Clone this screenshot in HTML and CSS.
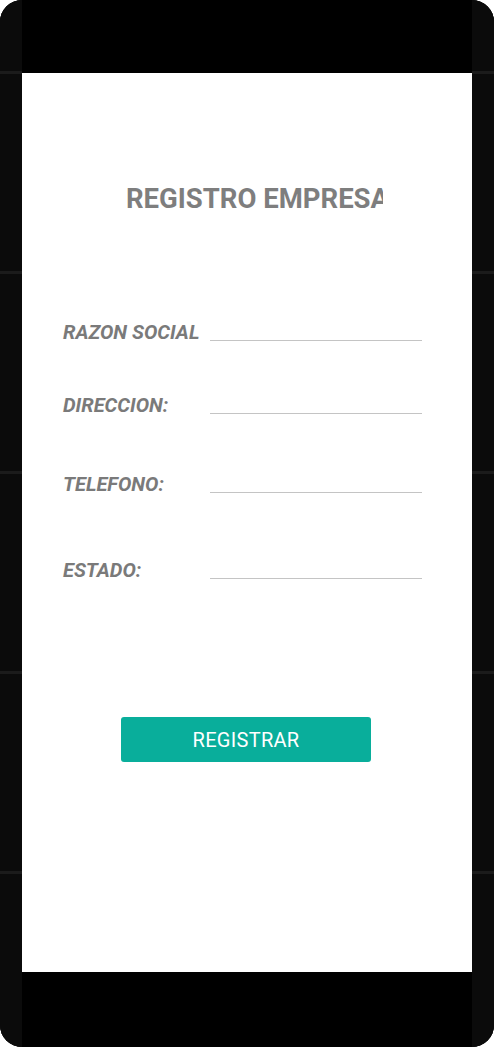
FILE: index.html
```html
<!DOCTYPE html>
<html lang="es">
<head>
<meta charset="utf-8">
<title>Registro Empresa</title>
<link rel="stylesheet" href="styles.css">
</head>
<body>
<div class="device">
  <div class="bezel"></div>
  <div class="center">
    <div class="bar bar--top"></div>
    <main class="screen">
      <h1 class="title">REGISTRO EMPRESA</h1>
      <div class="form">
        <div class="row row--1"><span class="label">RAZON SOCIAL</span><span class="field"></span></div>
        <div class="row row--2"><span class="label">DIRECCION:</span><span class="field"></span></div>
        <div class="row row--3"><span class="label">TELEFONO:</span><span class="field"></span></div>
        <div class="row row--4"><span class="label">ESTADO:</span><span class="field"></span></div>
      </div>
      <button class="btn" type="button">REGISTRAR</button>
    </main>
    <div class="bar bar--bottom"></div>
  </div>
  <div class="bezel"></div>
</div>
</body>
</html>
```

FILE: styles.css
```css
html, body {
  margin: 0;
  padding: 0;
  background: #ffffff;
}

.device {
  width: 494px;
  height: 1047px;
  display: grid;
  grid-template-columns: 22px 1fr 22px;
  border-radius: 22px;
  overflow: hidden;
  background: #000;
}

.bezel {
  background-color: #0b0b0b;
  background-image: linear-gradient(#1b1b1b 0 3px, #0b0b0b 3px 200px);
  background-size: 100% 200px;
  background-position: 0 71px;
  background-repeat: repeat-y;
}

.center {
  display: flex;
  flex-direction: column;
}

.bar {
  background: #000;
}

.bar--top { height: 73px; }
.bar--bottom { flex: 1; }

.screen {
  height: 899px;
  background: #fff;
  display: flex;
  flex-direction: column;
  font-family: Roboto, "Liberation Sans", sans-serif;
}

.title {
  margin: 111px 0 0 104px;
  font-size: 27.5px;
  line-height: 30px;
  font-weight: 700;
  color: #7e7e7e;
  width: 257px;
  white-space: nowrap;
  overflow: hidden;
}

.form {
  display: flex;
  flex-direction: column;
  margin-top: 106px;
  padding-left: 41px;
}

.row {
  display: flex;
  align-items: flex-end;
  height: 24px;
}

.row--2 { margin-top: 49px; }
.row--3 { margin-top: 55px; }
.row--4 { margin-top: 62px; }

.label {
  width: 147px;
  font-size: 20px;
  line-height: 24px;
  font-weight: 700;
  font-style: italic;
  color: #7a7a7a;
  white-space: nowrap;
}

.field {
  width: 212px;
  height: 0;
  border-bottom: 1px solid #c4c4c4;
  margin-bottom: 3px;
}

.btn {
  margin: 135px 0 0 99px;
  width: 250px;
  height: 45px;
  border: 0;
  border-radius: 3px;
  background: #09ae9b;
  color: #fff;
  font-family: Roboto, "Liberation Sans", sans-serif;
  font-size: 20px;
  letter-spacing: 0.3px;
  font-weight: 400;
  display: flex;
  align-items: center;
  justify-content: center;
  padding: 0;
}
```
